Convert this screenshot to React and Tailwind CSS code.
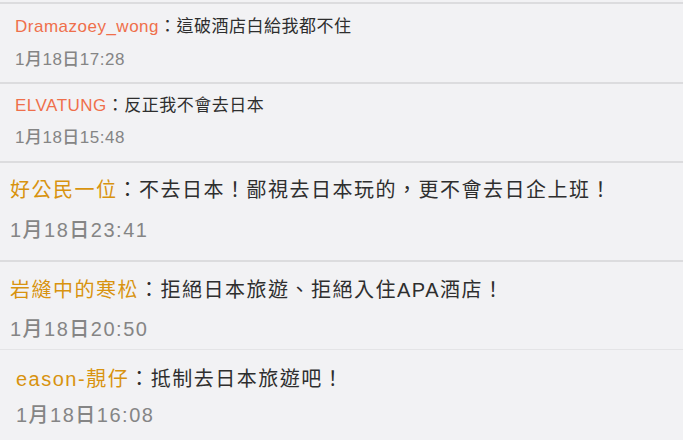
import React from 'react';

const comments = [
  {
    name: 'Dramazoey_wong',
    text: '這破酒店白給我都不住',
    time: '1月18日17:28',
    nameColor: 'text-[#ef6f4b]',
    size: 'text-[17px] leading-[20px] tracking-[0.5px]',
    row: 'border-t-2 border-[#dcdcde] pl-[15px] pt-[13px] pb-[12px] gap-[13px]',
  },
  {
    name: 'ELVATUNG',
    text: '反正我不會去日本',
    time: '1月18日15:48',
    nameColor: 'text-[#ef6f4b]',
    size: 'text-[17px] leading-[20px] tracking-[0.5px]',
    row: 'border-t-2 border-[#dcdcde] pl-[15px] pt-[12px] pb-[13px] gap-[12px]',
  },
  {
    name: '好公民一位',
    text: '不去日本！鄙視去日本玩的，更不會去日企上班！',
    time: '1月18日23:41',
    nameColor: 'text-[#d8930f]',
    size: 'text-[20px] leading-[24px] tracking-[1.5px]',
    row: 'border-t-2 border-[#dcdcde] pl-[10px] pt-[15px] pb-[18px] gap-[16px]',
  },
  {
    name: '岩縫中的寒松',
    text: '拒絕日本旅遊、拒絕入住APA酒店！',
    time: '1月18日20:50',
    nameColor: 'text-[#d8930f]',
    size: 'text-[20px] leading-[24px] tracking-[1.5px]',
    row: 'border-t-2 border-[#dcdcde] pl-[10px] pt-[16px] pb-[8px] gap-[15px]',
  },
  {
    name: 'eason-靚仔',
    text: '抵制去日本旅遊吧！',
    time: '1月18日16:08',
    nameColor: 'text-[#d8930f]',
    size: 'text-[20px] leading-[24px] tracking-[1.5px]',
    row: 'border-t border-[#e4e4e6] pl-[16px] pt-[17px] pb-[20px] gap-[12px]',
  },
];

const CommentRow = ({ c }) => (
  <div className={`flex flex-col ${c.row} ${c.size}`}>
    <p className="whitespace-nowrap">
      <span className={c.nameColor}>{c.name}</span>
      <span className="text-[#2e2e2e]">：{c.text}</span>
    </p>
    <p className="text-[#858585] font-medium whitespace-nowrap">{c.time}</p>
  </div>
);

const App = () => {
  return (
    <div
      className="w-[683px] h-[440px] overflow-hidden bg-[#f2f2f4] pt-[2px]"
      style={{ fontFamily: '"Liberation Sans", "Noto Sans CJK TC", sans-serif' }}
    >
      {comments.map((c) => (
        <CommentRow key={c.name} c={c} />
      ))}
    </div>
  );
};

export default App;
